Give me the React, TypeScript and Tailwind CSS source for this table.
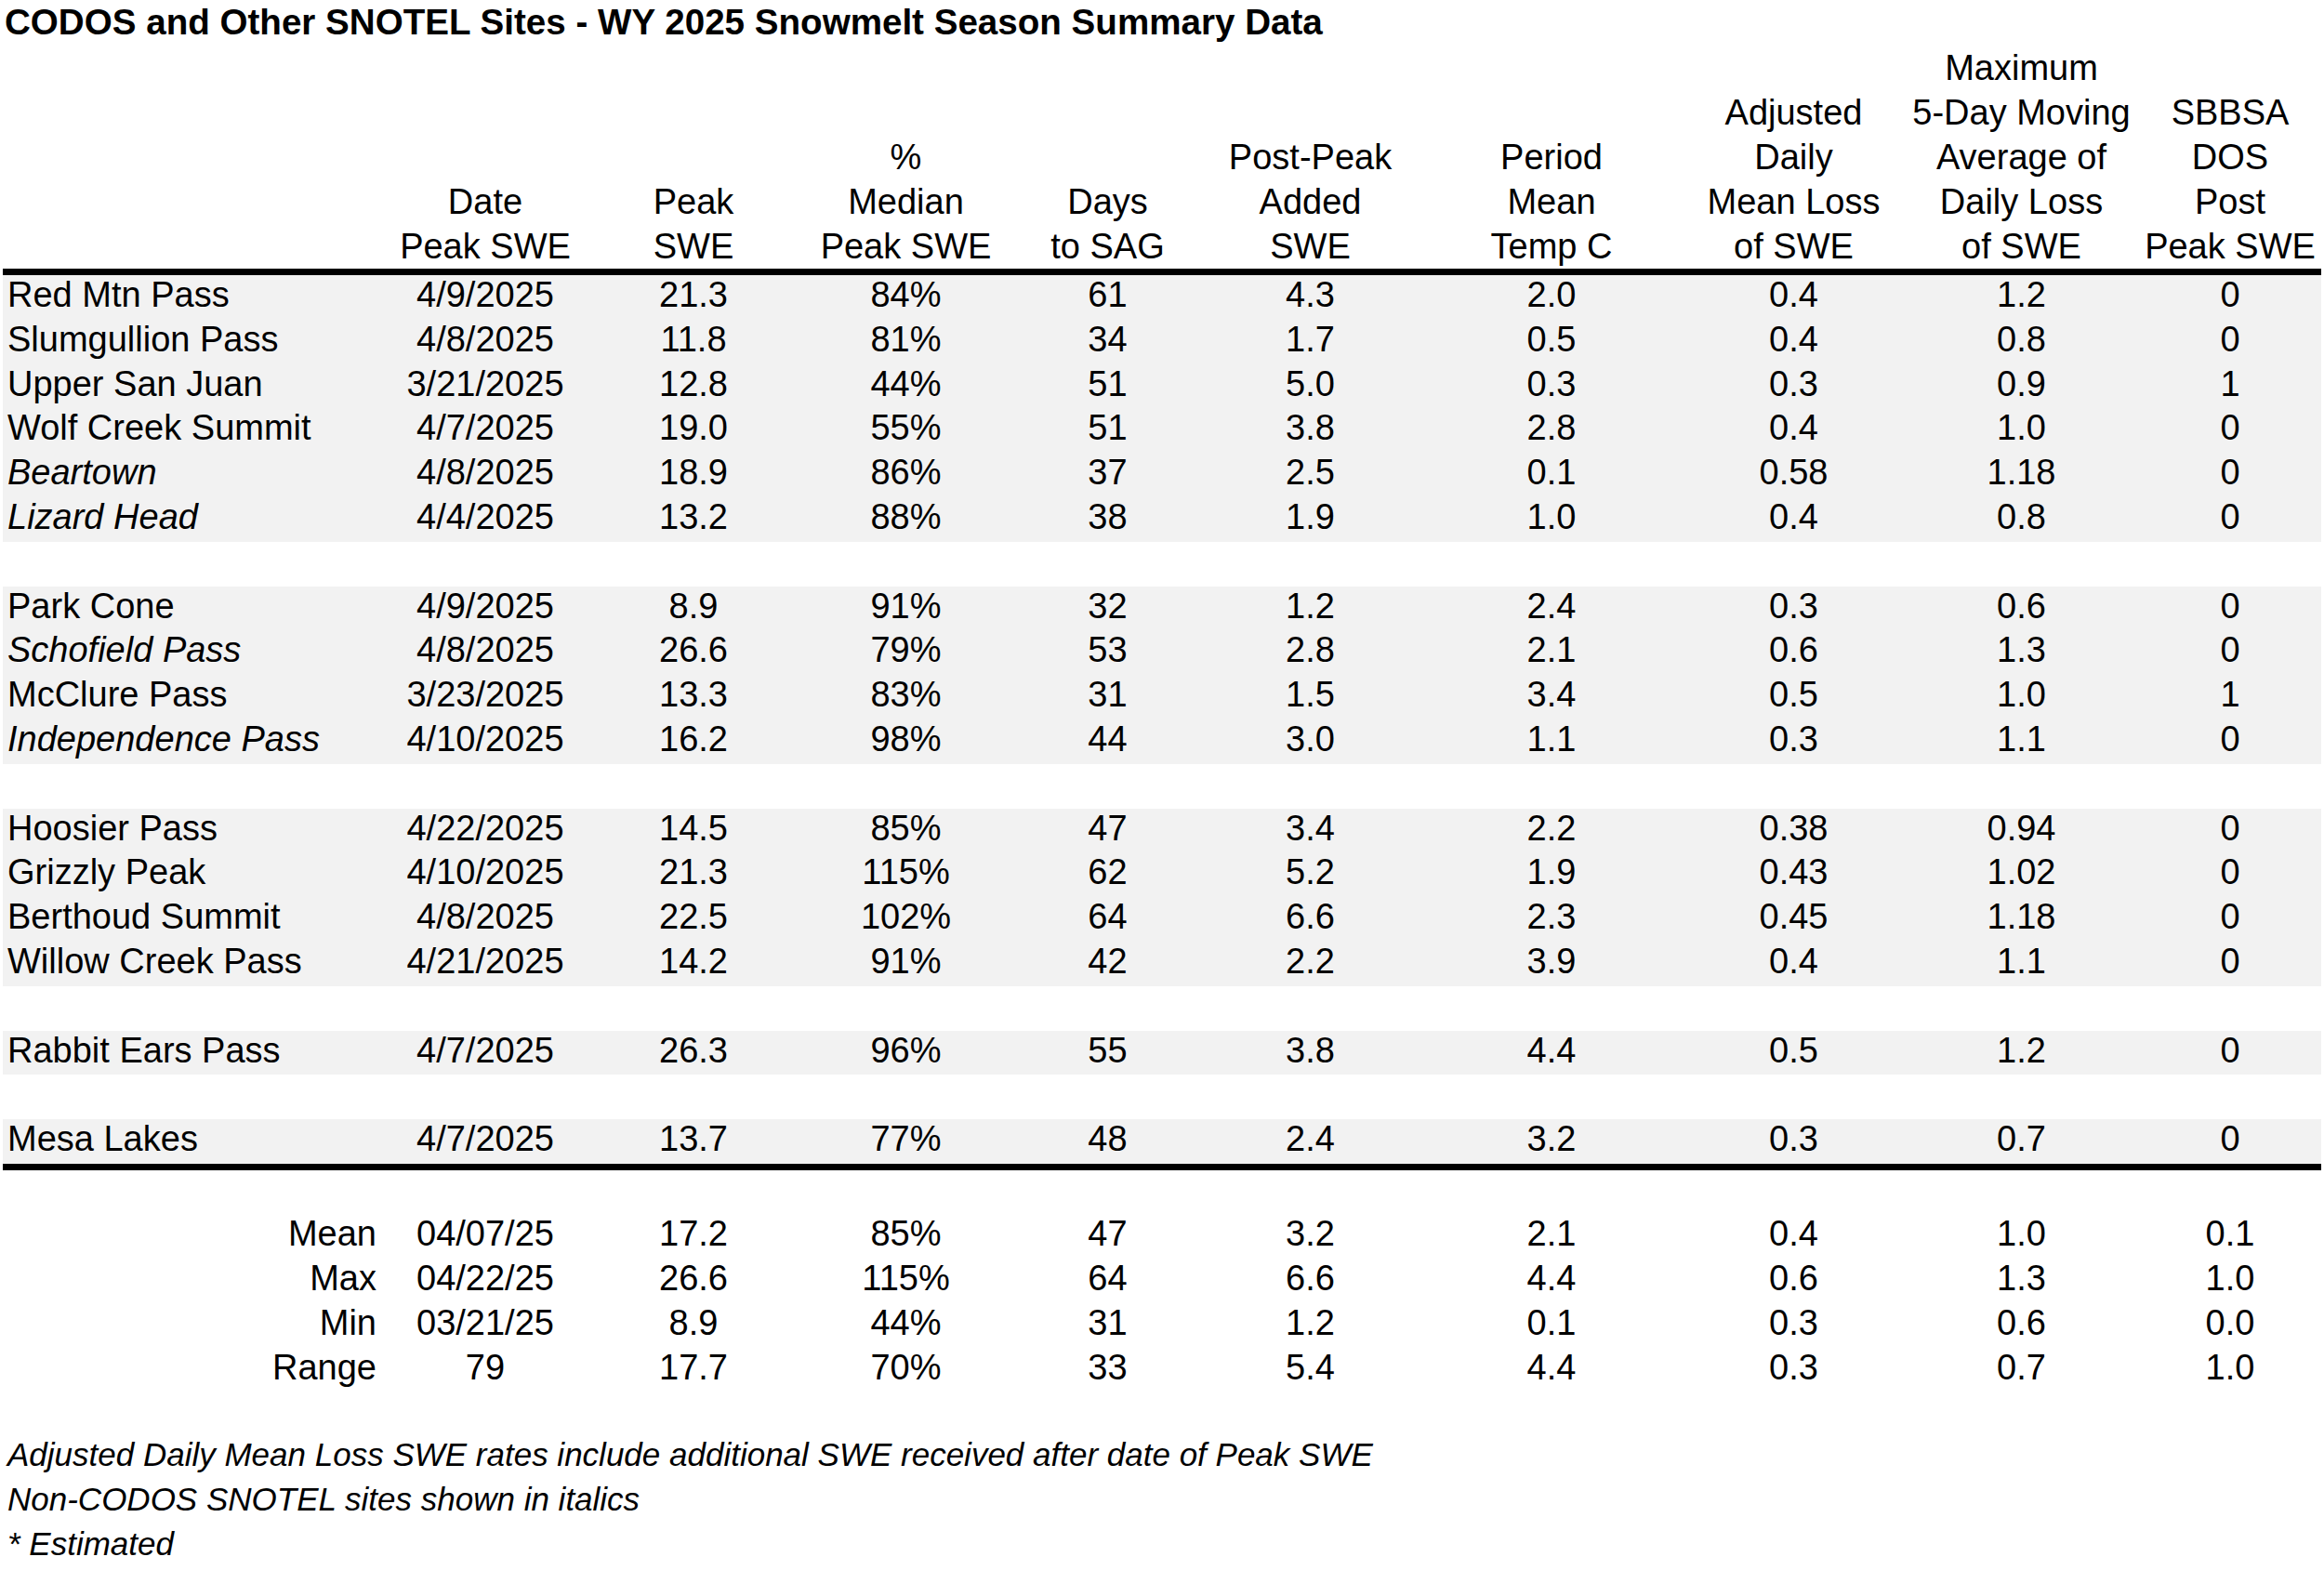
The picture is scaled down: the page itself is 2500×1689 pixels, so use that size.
import React from 'react'

type Row = {
  name: string
  italic?: boolean
  values: string[]
}

const cols = 'grid grid-cols-[407px_224px_224px_233px_201px_235px_284px_237px_253px_196px]'

const headers: string[][] = [
  [],
  ['Date', 'Peak SWE'],
  ['Peak', 'SWE'],
  ['%', 'Median', 'Peak SWE'],
  ['Days', 'to SAG'],
  ['Post-Peak', 'Added', 'SWE'],
  ['Period', 'Mean', 'Temp C'],
  ['Adjusted', 'Daily', 'Mean Loss', 'of SWE'],
  ['Maximum', '5-Day Moving', 'Average of', 'Daily Loss', 'of SWE'],
  ['SBBSA', 'DOS', 'Post', 'Peak SWE'],
]

const groups: Row[][] = [
  [
    { name: 'Red Mtn Pass', values: ['4/9/2025', '21.3', '84%', '61', '4.3', '2.0', '0.4', '1.2', '0'] },
    { name: 'Slumgullion Pass', values: ['4/8/2025', '11.8', '81%', '34', '1.7', '0.5', '0.4', '0.8', '0'] },
    { name: 'Upper San Juan', values: ['3/21/2025', '12.8', '44%', '51', '5.0', '0.3', '0.3', '0.9', '1'] },
    { name: 'Wolf Creek Summit', values: ['4/7/2025', '19.0', '55%', '51', '3.8', '2.8', '0.4', '1.0', '0'] },
    { name: 'Beartown', italic: true, values: ['4/8/2025', '18.9', '86%', '37', '2.5', '0.1', '0.58', '1.18', '0'] },
    { name: 'Lizard Head', italic: true, values: ['4/4/2025', '13.2', '88%', '38', '1.9', '1.0', '0.4', '0.8', '0'] },
  ],
  [
    { name: 'Park Cone', values: ['4/9/2025', '8.9', '91%', '32', '1.2', '2.4', '0.3', '0.6', '0'] },
    { name: 'Schofield Pass', italic: true, values: ['4/8/2025', '26.6', '79%', '53', '2.8', '2.1', '0.6', '1.3', '0'] },
    { name: 'McClure Pass', values: ['3/23/2025', '13.3', '83%', '31', '1.5', '3.4', '0.5', '1.0', '1'] },
    { name: 'Independence Pass', italic: true, values: ['4/10/2025', '16.2', '98%', '44', '3.0', '1.1', '0.3', '1.1', '0'] },
  ],
  [
    { name: 'Hoosier Pass', values: ['4/22/2025', '14.5', '85%', '47', '3.4', '2.2', '0.38', '0.94', '0'] },
    { name: 'Grizzly Peak', values: ['4/10/2025', '21.3', '115%', '62', '5.2', '1.9', '0.43', '1.02', '0'] },
    { name: 'Berthoud Summit', values: ['4/8/2025', '22.5', '102%', '64', '6.6', '2.3', '0.45', '1.18', '0'] },
    { name: 'Willow Creek Pass', values: ['4/21/2025', '14.2', '91%', '42', '2.2', '3.9', '0.4', '1.1', '0'] },
  ],
  [
    { name: 'Rabbit Ears Pass', values: ['4/7/2025', '26.3', '96%', '55', '3.8', '4.4', '0.5', '1.2', '0'] },
  ],
  [
    { name: 'Mesa Lakes', values: ['4/7/2025', '13.7', '77%', '48', '2.4', '3.2', '0.3', '0.7', '0'] },
  ],
]

const summary: Row[] = [
  { name: 'Mean', values: ['04/07/25', '17.2', '85%', '47', '3.2', '2.1', '0.4', '1.0', '0.1'] },
  { name: 'Max', values: ['04/22/25', '26.6', '115%', '64', '6.6', '4.4', '0.6', '1.3', '1.0'] },
  { name: 'Min', values: ['03/21/25', '8.9', '44%', '31', '1.2', '0.1', '0.3', '0.6', '0.0'] },
  { name: 'Range', values: ['79', '17.7', '70%', '33', '5.4', '4.4', '0.3', '0.7', '1.0'] },
]

const notes = [
  'Adjusted Daily Mean Loss SWE rates include additional SWE received after date of Peak SWE',
  'Non-CODOS SNOTEL sites shown in italics',
  '* Estimated',
]

function DataRow({ row }: { row: Row }) {
  return (
    <div className={`${cols} h-[47.8px] bg-[#f2f2f2] leading-[42px]`}>
      <div className={`pl-[5px] whitespace-nowrap ${row.italic ? 'italic' : ''}`}>{row.name}</div>
      {row.values.map((v, i) => (
        <div key={i} className="text-center whitespace-nowrap">{v}</div>
      ))}
    </div>
  )
}

export default function App() {
  return (
    <div className="w-[2500px] h-[1689px] bg-white text-black text-[38px] font-['Liberation_Sans',Arial,sans-serif] overflow-hidden">
      <div className="pl-[3px] w-[2497px]">
        {/* Title */}
        <div className="h-[48px] leading-[48px] pl-[2px] text-[38.6px] font-bold whitespace-nowrap">
          CODOS and Other SNOTEL Sites - WY 2025 Snowmelt Season Summary Data
        </div>

        {/* Header */}
        <div className={`${cols} h-[248px] border-b-[7px] border-black`}>
          {headers.map((lines, i) => (
            <div key={i} className="flex flex-col justify-end items-center leading-[48px]">
              {lines.map((l) => (
                <div key={l} className="whitespace-nowrap">{l}</div>
              ))}
            </div>
          ))}
        </div>

        {/* Body */}
        <div className="border-b-[7px] border-black">
          {groups.map((g, gi) => (
            <div key={gi}>
              {gi > 0 && <div className="h-[47.8px]" />}
              {g.map((r) => (
                <DataRow key={r.name} row={r} />
              ))}
            </div>
          ))}
        </div>

        {/* Summary */}
        <div className="h-[47px]" />
        {summary.map((r) => (
          <div key={r.name} className={`${cols} h-[48px] leading-[42px]`}>
            <div className="text-right pr-[5px]">{r.name}</div>
            {r.values.map((v, i) => (
              <div key={i} className="text-center whitespace-nowrap">{v}</div>
            ))}
          </div>
        ))}

        {/* Notes */}
        <div className="h-[46px]" />
        {notes.map((n) => (
          <div key={n} className="h-[48px] leading-[42px] pl-[5px] text-[35px] italic whitespace-nowrap">{n}</div>
        ))}
      </div>
    </div>
  )
}
